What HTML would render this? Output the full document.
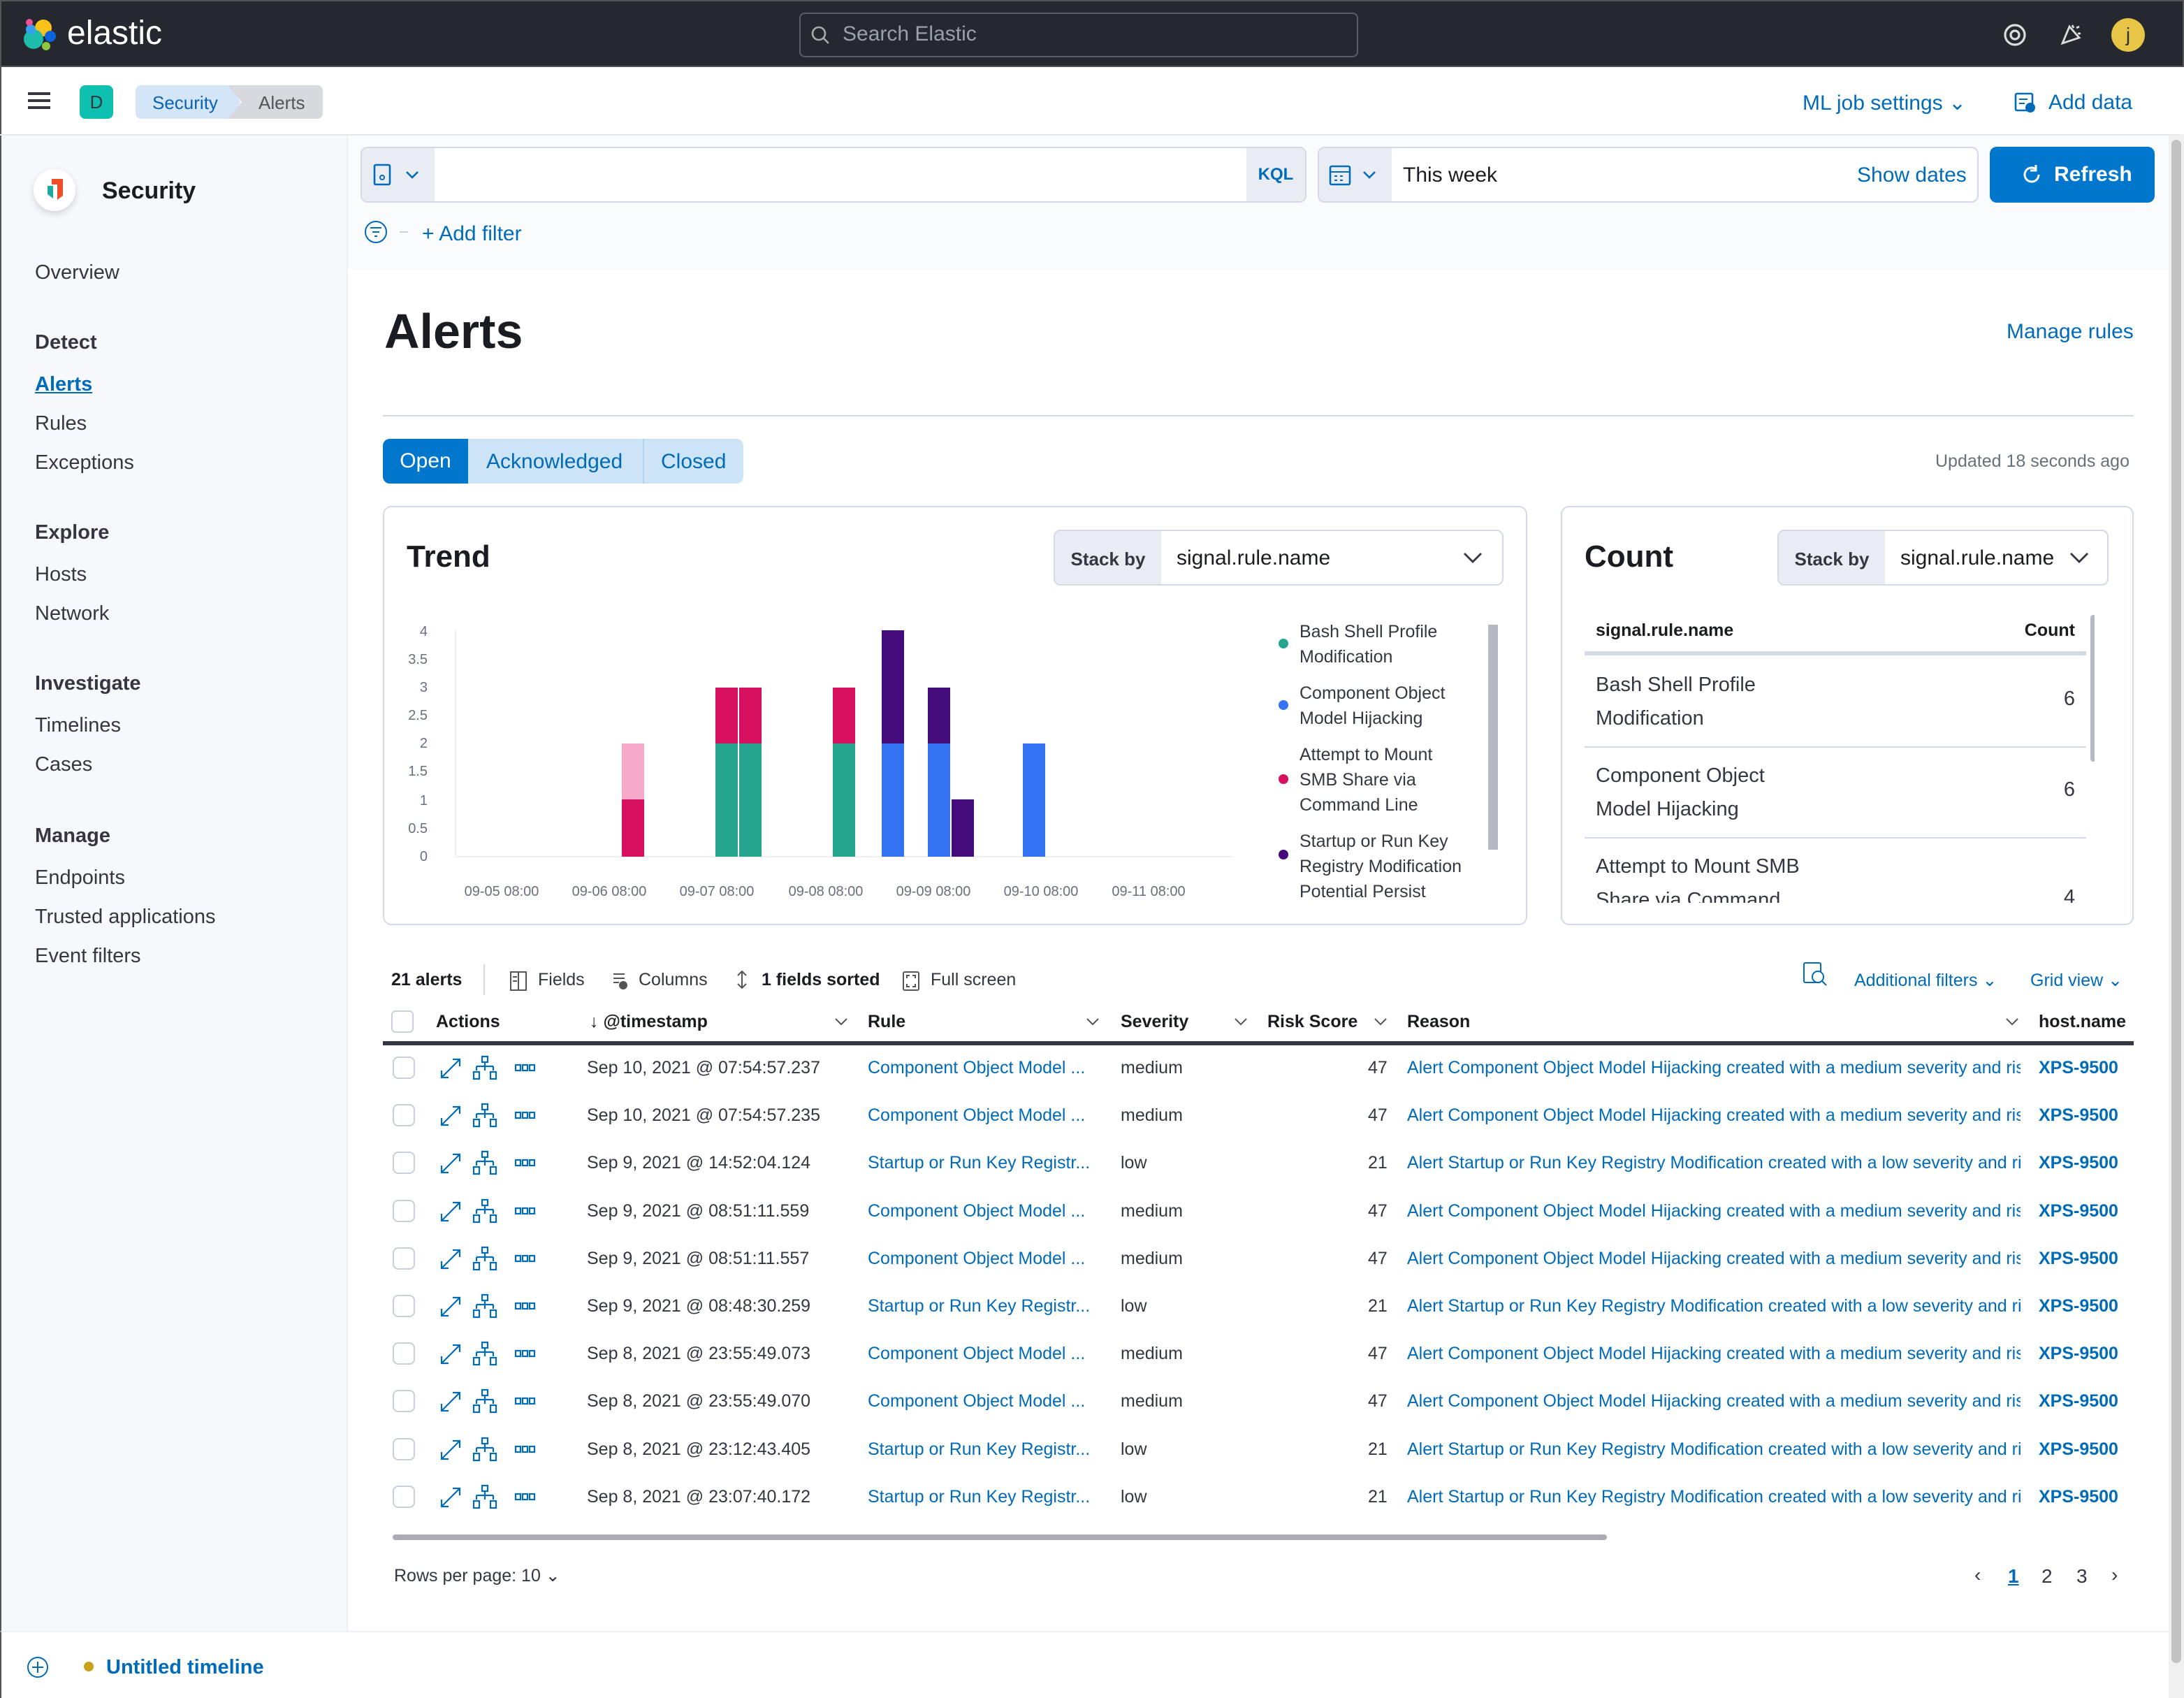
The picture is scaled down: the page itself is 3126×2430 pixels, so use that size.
<!DOCTYPE html>
<html><head><meta charset="utf-8">
<style>
html{zoom:2}
*{box-sizing:border-box;margin:0;padding:0}
body{width:1563px;height:1215px;overflow:hidden;font-family:"Liberation Sans",sans-serif;color:#343741;background:#fff;position:relative;font-size:14px}
.a{position:absolute;white-space:nowrap}
.blue{color:#006bb8}
.b{font-weight:bold}
</style></head><body>
<!-- top bar -->
<div class="a" style="left:0;top:0;width:1563px;height:48px;background:#25282f;border:1px solid #555"></div>
<svg class="a" style="left:16px;top:12px" width="26" height="26" viewBox="0 0 26 26"><circle cx="15" cy="8" r="6" fill="#f9c21b"/><circle cx="8" cy="16" r="7" fill="#1dbcab"/><circle cx="6" cy="9" r="3.5" fill="#36a2ef"/><circle cx="20" cy="14" r="4" fill="#0b64dd"/><circle cx="5" cy="4" r="2.5" fill="#ef5098"/><circle cx="17" cy="21" r="3" fill="#8dc63f"/></svg>
<div class="a" style="left:48px;top:10px;color:#fff;font-size:24px">elastic</div>
<div class="a" style="left:572px;top:9px;width:400px;height:32px;border:1px solid #5a5e66;border-radius:4px;background:#25282f"></div>
<svg class="a" style="left:580px;top:18px" width="14" height="14"><circle cx="6" cy="6" r="4.5" stroke="#aaa" fill="none" stroke-width="1.3"/><path d="M9.5 9.5L13 13" stroke="#aaa" stroke-width="1.3"/></svg>
<div class="a" style="left:603px;top:16px;color:#9aa0a8;font-size:15px">Search Elastic</div>
<svg class="a" style="left:1433px;top:16px" width="18" height="18"><circle cx="9" cy="9" r="7" stroke="#ddd" stroke-width="1.6" fill="none"/><circle cx="9" cy="9" r="3" stroke="#ddd" stroke-width="1.6" fill="none"/></svg>
<svg class="a" style="left:1473px;top:16px" width="18" height="18"><path d="M3 15L8 3L15 11Z M10 2l1 2M13 4l2-1M14 8l2 0" stroke="#ddd" stroke-width="1.4" fill="none"/></svg>
<div class="a" style="left:1511px;top:13px;width:24px;height:24px;border-radius:50%;background:#e7c547;color:#333;text-align:center;line-height:24px;font-size:14px">j</div>
<!-- header 2 -->
<div class="a" style="left:0;top:48px;width:1563px;height:48px;background:#fff;box-shadow:0 2px 4px rgba(0,0,0,.12);border-left:1px solid #555"></div>
<div class="a" style="left:20px;top:66px;width:16px;height:2px;background:#343741;box-shadow:0 5px 0 #343741,0 10px 0 #343741"></div>
<div class="a" style="left:57px;top:61px;width:24px;height:24px;border-radius:4px;background:#0ec0b0;text-align:center;line-height:24px;font-size:13px">D</div>
<div class="a" style="left:97px;top:61px;width:75px;height:24px;background:#d3e5f6;border-radius:4px 0 0 4px;clip-path:polygon(0 0,92% 0,100% 50%,92% 100%,0 100%)"></div>
<div class="a" style="left:109px;top:66px;color:#0a62b0;font-size:13px">Security</div>
<div class="a" style="left:163px;top:61px;width:68px;height:24px;background:#d7d9de;border-radius:0 4px 4px 0;clip-path:polygon(0 0,100% 0,100% 100%,0 100%,10px 50%)"></div>
<div class="a" style="left:185px;top:66px;font-size:13px;color:#555">Alerts</div>
<div class="a blue" style="left:1290px;top:65px;font-size:15px">ML job settings ⌄</div>
<svg class="a" style="left:1441px;top:65px" width="16" height="16"><rect x="1.5" y="2" width="12" height="12" rx="1" stroke="#006bb8" fill="none" stroke-width="1.3"/><path d="M4 6h6M4 9h4" stroke="#006bb8"/><circle cx="12" cy="12" r="3.5" fill="#006bb8"/></svg>
<div class="a blue" style="left:1466px;top:65px;font-size:15px">Add data</div>
<!-- sidebar -->
<div class="a" style="left:0;top:97px;width:249px;height:1070px;background:#f7f8fc;border-right:1px solid #eef0f4;border-left:1px solid #555"></div>
<div class="a" style="left:24px;top:121px;width:30px;height:30px;border-radius:50%;background:#fff;box-shadow:0 2px 5px rgba(0,0,0,.15)"></div>
<svg class="a" style="left:33px;top:128px" width="14" height="16"><path d="M4 0h8v12l-4 3V4H4z" fill="#f04e29"/><path d="M1 5h4v9L1 11z" fill="#1ba9a0"/></svg>
<div class="a b" style="left:73px;top:127px;font-size:17px;color:#1a1c21">Security</div>
<div class="a" style="left:25px;top:187px;font-size:14.5px">Overview</div>
<div class="a b" style="left:25px;top:237px;font-size:14.5px">Detect</div>
<div class="a b blue" style="left:25px;top:267px;font-size:14.5px;text-decoration:underline">Alerts</div>
<div class="a" style="left:25px;top:295px;font-size:14.5px">Rules</div>
<div class="a" style="left:25px;top:323px;font-size:14.5px">Exceptions</div>
<div class="a b" style="left:25px;top:373px;font-size:14.5px">Explore</div>
<div class="a" style="left:25px;top:403px;font-size:14.5px">Hosts</div>
<div class="a" style="left:25px;top:431px;font-size:14.5px">Network</div>
<div class="a b" style="left:25px;top:481px;font-size:14.5px">Investigate</div>
<div class="a" style="left:25px;top:511px;font-size:14.5px">Timelines</div>
<div class="a" style="left:25px;top:539px;font-size:14.5px">Cases</div>
<div class="a b" style="left:25px;top:590px;font-size:14.5px">Manage</div>
<div class="a" style="left:25px;top:620px;font-size:14.5px">Endpoints</div>
<div class="a" style="left:25px;top:648px;font-size:14.5px">Trusted applications</div>
<div class="a" style="left:25px;top:676px;font-size:14.5px">Event filters</div>
<!-- query area -->
<div class="a" style="left:249px;top:97px;width:1303px;height:96px;background:#fafbfd"></div>
<div class="a" style="left:258px;top:105px;width:677px;height:40px;border:1px solid #d3dae6;border-radius:5px;background:#fff;overflow:hidden">
 <div style="position:absolute;left:0;top:0;width:52px;height:40px;background:#e9edf3"></div>
 <div style="position:absolute;right:0;top:0;width:42px;height:40px;background:#e9edf3;color:#006bb8;font-size:12px;font-weight:bold;text-align:center;line-height:38px">KQL</div>
</div>
<svg class="a" style="left:267px;top:117px" width="36" height="16"><rect x="1" y="1" width="11" height="14" rx="1" stroke="#006bb8" fill="none" stroke-width="1.3"/><circle cx="6.5" cy="10" r="1.5" stroke="#006bb8" fill="none"/><path d="M24 6l4 4 4-4" stroke="#006bb8" fill="none" stroke-width="1.3"/></svg>
<div class="a" style="left:943px;top:105px;width:473px;height:40px;border:1px solid #d3dae6;border-radius:5px;background:#fff;overflow:hidden"><div style="position:absolute;left:0;top:0;width:52px;height:40px;background:#e9edf3"></div></div>
<svg class="a" style="left:951px;top:117px" width="40" height="16"><rect x="1" y="2" width="14" height="13" rx="1" stroke="#006bb8" fill="none" stroke-width="1.3"/><path d="M1 6h14M4 9h2M8 9h2M4 12h2M8 12h2" stroke="#006bb8"/><path d="M25 6l4 4 4-4" stroke="#006bb8" fill="none" stroke-width="1.3"/></svg>
<div class="a" style="left:1004px;top:117px;font-size:15px;color:#1a1c21">This week</div>
<div class="a blue" style="left:1329px;top:117px;font-size:15px">Show dates</div>
<div class="a" style="left:1424px;top:105px;width:118px;height:40px;background:#0077cc;border-radius:5px;color:#fff;font-weight:bold;font-size:15px;line-height:40px;padding-left:46px">Refresh</div>
<svg class="a" style="left:1446px;top:117px" width="16" height="16"><path d="M13 8a5 5 0 1 1-2-4" stroke="#fff" stroke-width="1.5" fill="none"/><path d="M11 1v4h-4" stroke="#fff" stroke-width="1.5" fill="none"/></svg>
<svg class="a" style="left:261px;top:157px" width="34" height="18"><circle cx="8" cy="9" r="7.5" stroke="#006bb8" fill="none"/><path d="M4 6h8M5.5 9h5M7 12h2" stroke="#006bb8"/><path d="M25 9h6" stroke="#c9d0db"/></svg>
<div class="a blue" style="left:302px;top:159px;font-size:15px">+ Add filter</div>
<!-- heading -->
<div class="a b" style="left:275px;top:217px;font-size:35px;color:#1a1c21">Alerts</div>
<div class="a blue" style="left:1436px;top:229px;font-size:15px">Manage rules</div>
<div class="a" style="left:274px;top:297px;width:1253px;height:1px;background:#d3dae6"></div>
<div class="a" style="left:274px;top:314px;width:258px;height:32px;background:#cce4f5;border-radius:5px"></div>
<div class="a" style="left:274px;top:314px;width:61px;height:32px;background:#0077cc;border-radius:5px 0 0 5px;color:#fff;font-size:15px;line-height:32px;text-align:center">Open</div>
<div class="a" style="left:460px;top:314px;width:1px;height:32px;background:#b3d3ee"></div>
<div class="a blue" style="left:348px;top:322px;font-size:15px">Acknowledged</div>
<div class="a blue" style="left:473px;top:322px;font-size:15px">Closed</div>
<div class="a" style="left:1385px;top:323px;font-size:12.5px;color:#69707d">Updated 18 seconds ago</div>
<!-- trend panel -->
<div class="a" style="left:274px;top:362px;width:819px;height:300px;border:1px solid #d3dae6;border-radius:6px"></div>
<div class="a b" style="left:291px;top:386px;font-size:22px;color:#1a1c21">Trend</div>
<div class="a" style="left:754px;top:379px;width:322px;height:40px;border:1px solid #d3dae6;border-radius:5px;overflow:hidden"><div style="position:absolute;left:0;top:0;width:76px;height:40px;background:#e9edf3;font-size:13px;font-weight:bold;line-height:40px;text-align:center">Stack by</div></div>
<div class="a" style="left:842px;top:391px;font-size:15px;color:#1a1c21">signal.rule.name</div>
<svg class="a" style="left:1047px;top:394px" width="14" height="10"><path d="M1 2l6 6 6-6" stroke="#343741" fill="none" stroke-width="1.4"/></svg>
<svg class="a" style="left:280px;top:439px" width="620" height="210">
<g font-size="10" fill="#69707d" text-anchor="end" font-family="Liberation Sans">
<text x="26" y="16">4</text><text x="26" y="36">3.5</text><text x="26" y="56">3</text><text x="26" y="76">2.5</text><text x="26" y="96">2</text><text x="26" y="116">1.5</text><text x="26" y="137">1</text><text x="26" y="157">0.5</text><text x="26" y="177">0</text></g>
<path d="M46 12V174M46 174H602" stroke="#eef0f3"/>
<g font-size="10" fill="#69707d" text-anchor="middle" font-family="Liberation Sans"><text x="79" y="202">09-05 08:00</text><text x="156" y="202">09-06 08:00</text><text x="233" y="202">09-07 08:00</text><text x="311" y="202">09-08 08:00</text><text x="388" y="202">09-09 08:00</text><text x="465" y="202">09-10 08:00</text><text x="542" y="202">09-11 08:00</text></g>
<rect x="165" y="133" width="16" height="41" fill="#d6105f"/><rect x="165" y="93" width="16" height="40" fill="#f6a9c9"/>
<rect x="232" y="93" width="16" height="81" fill="#25a58e"/><rect x="232" y="53" width="16" height="40" fill="#d6105f"/>
<rect x="249" y="93" width="16" height="81" fill="#25a58e"/><rect x="249" y="53" width="16" height="40" fill="#d6105f"/>
<rect x="316" y="93" width="16" height="81" fill="#25a58e"/><rect x="316" y="53" width="16" height="40" fill="#d6105f"/>
<rect x="351" y="93" width="16" height="81" fill="#3573f5"/><rect x="351" y="12" width="16" height="81" fill="#440b7a"/>
<rect x="384" y="93" width="16" height="81" fill="#3573f5"/><rect x="384" y="53" width="16" height="40" fill="#440b7a"/>
<rect x="401" y="133" width="16" height="41" fill="#440b7a"/>
<rect x="452" y="93" width="16" height="81" fill="#3573f5"/>
</svg>
<div class="a" style="left:913px;top:443px;width:160px;height:200px;overflow:hidden;font-size:12.5px;line-height:18px;color:#343741">
<div style="position:absolute;left:17px;top:0">Bash Shell Profile<br>Modification</div><div style="position:absolute;left:2px;top:14px;width:7px;height:7px;border-radius:50%;background:#25a58e"></div>
<div style="position:absolute;left:17px;top:44px">Component Object<br>Model Hijacking</div><div style="position:absolute;left:2px;top:58px;width:7px;height:7px;border-radius:50%;background:#3573f5"></div>
<div style="position:absolute;left:17px;top:88px">Attempt to Mount<br>SMB Share via<br>Command Line</div><div style="position:absolute;left:2px;top:111px;width:7px;height:7px;border-radius:50%;background:#d6105f"></div>
<div style="position:absolute;left:17px;top:150px">Startup or Run Key<br>Registry Modification<br>Potential Persist</div><div style="position:absolute;left:2px;top:165px;width:7px;height:7px;border-radius:50%;background:#440b7a"></div>
<div style="position:absolute;left:152px;top:4px;width:7px;height:161px;background:#b4b8c0"></div>
</div>
<!-- count panel -->
<div class="a" style="left:1117px;top:362px;width:410px;height:300px;border:1px solid #d3dae6;border-radius:6px"></div>
<div class="a b" style="left:1134px;top:386px;font-size:22px;color:#1a1c21">Count</div>
<div class="a" style="left:1272px;top:379px;width:237px;height:40px;border:1px solid #d3dae6;border-radius:5px;overflow:hidden"><div style="position:absolute;left:0;top:0;width:76px;height:40px;background:#e9edf3;font-size:13px;font-weight:bold;line-height:40px;text-align:center">Stack by</div></div>
<div class="a" style="left:1360px;top:391px;font-size:15px;color:#1a1c21">signal.rule.name</div>
<svg class="a" style="left:1481px;top:394px" width="14" height="10"><path d="M1 2l6 6 6-6" stroke="#343741" fill="none" stroke-width="1.4"/></svg>
<div class="a" style="left:1134px;top:440px;width:365px;height:206px;overflow:hidden">
<div style="position:absolute;left:8px;top:4px;font-size:12.5px;font-weight:bold;color:#1a1c21">signal.rule.name</div>
<div style="position:absolute;right:14px;top:4px;font-size:12.5px;font-weight:bold;color:#1a1c21">Count</div>
<div style="position:absolute;left:0;top:26px;width:359px;height:3px;background:#d3dae6"></div>
<div style="position:absolute;left:8px;top:38px;font-size:14.5px;line-height:24px">Bash Shell Profile<br>Modification</div><div style="position:absolute;right:14px;top:52px;font-size:14.5px">6</div>
<div style="position:absolute;left:0;top:94px;width:359px;height:1px;background:#d3dae6"></div>
<div style="position:absolute;left:8px;top:103px;font-size:14.5px;line-height:24px">Component Object<br>Model Hijacking</div><div style="position:absolute;right:14px;top:117px;font-size:14.5px">6</div>
<div style="position:absolute;left:0;top:159px;width:359px;height:1px;background:#d3dae6"></div>
<div style="position:absolute;left:8px;top:168px;font-size:14.5px;line-height:24px">Attempt to Mount SMB<br>Share via Command</div><div style="position:absolute;right:14px;top:194px;font-size:14.5px">4</div>
<div style="position:absolute;left:362px;top:0;width:4px;height:105px;border-radius:2px;background:#b4b8c0"></div>
</div>
<!-- table toolbar -->
<div class="a b" style="left:280px;top:694px;font-size:12.5px;color:#1a1c21">21 alerts</div>
<div class="a" style="left:346px;top:690px;width:1px;height:22px;background:#d3dae6"></div>
<svg class="a" style="left:365px;top:695px" width="12" height="14"><rect x=".5" y=".5" width="11" height="13" stroke="#555" fill="none"/><path d="M6 1v12M2 4h3M2 7h3" stroke="#555"/></svg>
<div class="a" style="left:385px;top:694px;font-size:12.5px">Fields</div>
<svg class="a" style="left:438px;top:695px" width="12" height="14"><path d="M1 2h8M1 5h8M1 8h4" stroke="#555"/><circle cx="8" cy="10" r="3" fill="#555"/></svg>
<div class="a" style="left:457px;top:694px;font-size:12.5px">Columns</div>
<svg class="a" style="left:526px;top:694px" width="10" height="14"><path d="M5 1v12M2 4l3-3 3 3M2 10l3 3 3-3" stroke="#555" fill="none"/></svg>
<div class="a b" style="left:545px;top:694px;font-size:12.5px;color:#1a1c21">1 fields sorted</div>
<svg class="a" style="left:646px;top:695px" width="12" height="14"><rect x=".5" y=".5" width="11" height="13" rx="1" stroke="#555" fill="none"/><path d="M3 5V3h2M9 5V3H7M3 9v2h2M9 9v2H7" stroke="#555" fill="none"/></svg>
<div class="a" style="left:666px;top:694px;font-size:12.5px">Full screen</div>
<svg class="a" style="left:1290px;top:688px" width="18" height="18"><rect x="1" y="1" width="12" height="14" rx="1" stroke="#006bb8" fill="none"/><circle cx="11" cy="11" r="4" stroke="#006bb8" fill="#fff"/><path d="M14 14l3 3" stroke="#006bb8"/></svg>
<div class="a blue" style="left:1327px;top:694px;font-size:12.5px">Additional filters ⌄</div>
<div class="a blue" style="left:1453px;top:694px;font-size:12.5px">Grid view ⌄</div>
<!-- table header -->
<div class="a" style="left:280px;top:723px;width:16px;height:16px;border:1px solid #c9cfd8;border-radius:3px"></div>
<div class="a b" style="left:312px;top:724px;font-size:12.5px;color:#1a1c21">Actions</div>
<div class="a b" style="left:422px;top:724px;font-size:12.5px;color:#1a1c21">↓ @timestamp</div>
<div class="a b" style="left:621px;top:724px;font-size:12.5px;color:#1a1c21">Rule</div>
<div class="a b" style="left:802px;top:724px;font-size:12.5px;color:#1a1c21">Severity</div>
<div class="a b" style="left:907px;top:724px;font-size:12.5px;color:#1a1c21">Risk Score</div>
<div class="a b" style="left:1007px;top:724px;font-size:12.5px;color:#1a1c21">Reason</div>
<div class="a b" style="left:1459px;top:724px;font-size:12.5px;color:#1a1c21">host.name</div>
<svg class="a" style="left:596px;top:727px" width="850" height="10" fill="none" stroke="#555"><path d="M2 2l4 4 4-4M182 2l4 4 4-4M288 2l4 4 4-4M388 2l4 4 4-4M840 2l4 4 4-4"/></svg>
<div class="a" style="left:274px;top:745px;width:1253px;height:3px;background:#343741"></div>
<div id="rows"></div>
<div class="a" style="left:281px;top:1098px;width:869px;height:4px;border-radius:2px;background:#a8adb5"></div>
<div class="a" style="left:282px;top:1120px;font-size:12.5px">Rows per page: 10 ⌄</div>
<div class="a" style="left:1413px;top:1119px;font-size:14px">‹</div>
<div class="a blue b" style="left:1437px;top:1120px;font-size:14px;text-decoration:underline">1</div>
<div class="a" style="left:1461px;top:1120px;font-size:14px">2</div>
<div class="a" style="left:1486px;top:1120px;font-size:14px">3</div>
<div class="a" style="left:1511px;top:1119px;font-size:14px">›</div>
<!-- bottom bar -->
<div class="a" style="left:0;top:1167px;width:1552px;height:48px;background:#fff;border-top:1px solid #eef0f4;border-left:1px solid #555"></div>
<svg class="a" style="left:19px;top:1185px" width="16" height="16"><circle cx="8" cy="8" r="7" stroke="#006bb8" fill="none"/><path d="M8 4v8M4 8h8" stroke="#006bb8"/></svg>
<div class="a" style="left:60px;top:1189px;width:7px;height:7px;border-radius:50%;background:#c9a21a"></div>
<div class="a blue b" style="left:76px;top:1185px;font-size:14.5px">Untitled timeline</div>
<!-- page scrollbar -->
<div class="a" style="left:1552px;top:97px;width:11px;height:1118px;background:#f0f0f0"></div>
<div class="a" style="left:1554px;top:100px;width:7px;height:1090px;border-radius:4px;background:#c2c2c2"></div>
<script>
var d=[["Sep 10, 2021 @ 07:54:57.237","C"],["Sep 10, 2021 @ 07:54:57.235","C"],["Sep 9, 2021 @ 14:52:04.124","S"],["Sep 9, 2021 @ 08:51:11.559","C"],["Sep 9, 2021 @ 08:51:11.557","C"],["Sep 9, 2021 @ 08:48:30.259","S"],["Sep 8, 2021 @ 23:55:49.073","C"],["Sep 8, 2021 @ 23:55:49.070","C"],["Sep 8, 2021 @ 23:12:43.405","S"],["Sep 8, 2021 @ 23:07:40.172","S"]];
var h="";d.forEach(function(r,i){var y=756+i*34.1;var c=r[1]=="C";
h+='<div class="a" style="left:281px;top:'+(y)+'px;width:16px;height:16px;border:1px solid #c9cfd8;border-radius:4px"></div>';
h+='<svg class="a" style="left:315px;top:'+(y-1)+'px" width="80" height="18" fill="none" stroke="#006bb8" stroke-width="1.1"><path d="M1 16l13-13M9 3h5v5M1 11v5h5"/><rect x="30" y="1" width="4" height="4"/><path d="M32 5v3M26 8h12M26 8v3M32 8v3M38 8v3"/><rect x="24" y="12" width="4" height="5"/><rect x="36" y="12" width="4" height="5"/><rect x="54" y="7" width="3.5" height="4"/><rect x="59" y="7" width="3.5" height="4"/><rect x="64" y="7" width="3.5" height="4"/></svg>';
h+='<div class="a" style="left:420px;top:'+y+'px;font-size:12.5px;line-height:16px">'+r[0]+'</div>';
h+='<div class="a blue" style="left:621px;top:'+y+'px;font-size:12.5px;line-height:16px">'+(c?'Component Object Model ...':'Startup or Run Key Registr...')+'</div>';
h+='<div class="a" style="left:802px;top:'+y+'px;font-size:12.5px;line-height:16px">'+(c?'medium':'low')+'</div>';
h+='<div class="a" style="left:979px;top:'+y+'px;font-size:12.5px;line-height:16px">'+(c?'47':'21')+'</div>';
h+='<div class="a blue" style="left:1007px;top:'+y+'px;width:439px;overflow:hidden;font-size:12.5px;line-height:16px">'+(c?'Alert Component Object Model Hijacking created with a medium severity and risk':'Alert Startup or Run Key Registry Modification created with a low severity and risk')+'</div>';
h+='<div class="a blue b" style="left:1459px;top:'+y+'px;font-size:12.5px;line-height:16px">XPS-9500</div>';});
document.getElementById("rows").outerHTML=h;
</script>
</body></html>
